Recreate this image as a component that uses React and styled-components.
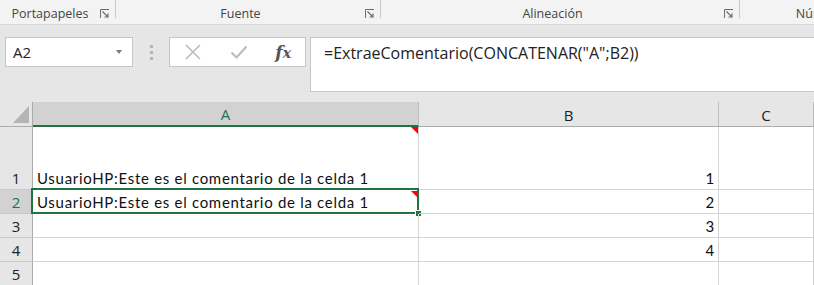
import styled, { createGlobalStyle } from "styled-components";

const GlobalStyle = createGlobalStyle`
  body {
    margin: 0;
    background: #e6e6e6;
    overflow: hidden;
  }
`;

const groups = [
  { label: "Portapapeles", width: 116 },
  { label: "Fuente", width: 265 },
  { label: "Alineación", width: 359 },
  { label: "Número", width: 176 },
];

const rows = [
  { n: 1, a: "UsuarioHP:Este es el comentario de la celda 1", b: "1", height: 63, comment: true },
  { n: 2, a: "UsuarioHP:Este es el comentario de la celda 1", b: "2", height: 24, comment: true, selected: true },
  { n: 3, a: "", b: "3", height: 24 },
  { n: 4, a: "", b: "4", height: 24 },
  { n: 5, a: "", b: "", height: 24 },
];

function Launcher() {
  return (
    <LauncherIcon width="10" height="10" viewBox="0 0 10 10">
      <path d="M0.5 9V0.5H9" fill="none" stroke="#6b6b6b" strokeWidth="1" />
      <path d="M2.5 2.5L8 8M8 4.5V8H4.5" fill="none" stroke="#6b6b6b" strokeWidth="1.2" />
    </LauncherIcon>
  );
}

function App() {
  return (
    <Wrapper>
      <GlobalStyle />
      <Ribbon>
        {groups.map((g) => (
          <Group key={g.label} $width={g.width}>
            <GroupLabel>{g.label}</GroupLabel>
            <Launcher />
            <GroupSeparator />
          </Group>
        ))}
      </Ribbon>

      <FormulaRow>
        <NameBox>
          <span>A2</span>
          <DropArrow />
        </NameBox>
        <Grip>
          <i />
          <i />
          <i />
        </Grip>
        <ActionBox>
          <svg width="18" height="18" viewBox="0 0 18 18">
            <path d="M2 2L16 16M16 2L2 16" stroke="#bcbcbc" strokeWidth="1.6" />
          </svg>
          <svg width="18" height="18" viewBox="0 0 18 18">
            <path d="M1.5 9.5L6.5 14.5L16.5 3.5" fill="none" stroke="#bcbcbc" strokeWidth="2.2" />
          </svg>
          <Fx>
            f<sub>x</sub>
          </Fx>
        </ActionBox>
        <FormulaBox>=ExtraeComentario(CONCATENAR("A";B2))</FormulaBox>
      </FormulaRow>

      <Sheet $rows={rows.map((r) => r.height)}>
        <Corner>
          <svg width="16" height="17" viewBox="0 0 16 17">
            <polygon points="16,0 16,17 0,17" fill="#b5b5b5" />
          </svg>
        </Corner>
        <ColHeader $selected>A</ColHeader>
        <ColHeader>B</ColHeader>
        <ColHeader>C</ColHeader>

        {rows.map((r) => (
          <Row key={r.n}>
            <RowHeader $selected={r.selected}>{r.n}</RowHeader>
            <Cell>
              {r.a}
              {r.comment && <Comment $inset={r.selected} />}
              {r.selected && (
                <Selection>
                  <FillHandle />
                </Selection>
              )}
            </Cell>
            <Cell $align="right">{r.b}</Cell>
            <Cell />
          </Row>
        ))}
      </Sheet>
    </Wrapper>
  );
}

const Wrapper = styled.div`
  width: 814px;
  height: 285px;
  overflow: hidden;
  font-family: "Open Sans", "Noto Sans", sans-serif;
`;

const Ribbon = styled.div`
  display: flex;
  height: 25px;
  box-sizing: border-box;
  background: #f3f3f3;
  border-bottom: 1px solid #d6d6d6;
  white-space: nowrap;
`;

const Group = styled.div`
  flex: none;
  display: flex;
  align-items: flex-start;
  width: ${(p) => p.$width}px;
  height: 24px;
`;

const GroupLabel = styled.div`
  flex: 1;
  min-width: 0;
  text-align: center;
  padding-top: 5px;
  font-size: 12.5px;
  line-height: 17px;
  color: #444;
`;

const LauncherIcon = styled.svg`
  flex: none;
  margin-top: 9px;
  margin-right: 5px;
`;

const GroupSeparator = styled.div`
  flex: none;
  width: 1px;
  height: 18px;
  background: #c9c9c9;
`;

const FormulaRow = styled.div`
  display: flex;
  align-items: flex-start;
  height: 77px;
  box-sizing: border-box;
  padding: 12px 0 0 5px;
`;

const NameBox = styled.div`
  flex: none;
  display: flex;
  align-items: center;
  justify-content: space-between;
  width: 128px;
  height: 30px;
  box-sizing: border-box;
  padding: 0 10px 0 7px;
  background: #fff;
  border: 1px solid #c6c6c6;
  font-size: 15px;
  color: #222;
`;

const DropArrow = styled.span`
  width: 0;
  height: 0;
  border-left: 3.5px solid transparent;
  border-right: 3.5px solid transparent;
  border-top: 4px solid #7a7a7a;
`;

const Grip = styled.div`
  flex: none;
  display: flex;
  flex-direction: column;
  align-items: center;
  gap: 3px;
  width: 36px;
  padding-top: 8px;

  i {
    width: 3px;
    height: 3px;
    background: #b5b5b5;
  }
`;

const ActionBox = styled.div`
  flex: none;
  display: flex;
  align-items: center;
  justify-content: space-between;
  width: 137px;
  height: 30px;
  box-sizing: border-box;
  padding: 0 14px 0 14px;
  margin-right: 4px;
  background: #fff;
  border: 1px solid #c6c6c6;
`;

const Fx = styled.span`
  font-family: "DejaVu Serif", "Liberation Serif", serif;
  font-style: italic;
  font-weight: bold;
  font-size: 17px;
  color: #555;
  line-height: 1;

  sub {
    font-size: 14px;
    vertical-align: 0;
  }
`;

const FormulaBox = styled.div`
  flex: 1;
  height: 55px;
  box-sizing: border-box;
  margin-right: -2px;
  padding: 5px 13px;
  background: #fff;
  border: 1px solid #c6c6c6;
  font-size: 16px;
  line-height: 20px;
  color: #222;
  white-space: nowrap;
`;

const Sheet = styled.div`
  display: grid;
  grid-template-columns: 33px 386px 300px 1fr;
  grid-template-rows: 25px ${(p) => p.$rows.map((h) => `${h}px`).join(" ")};
  background: #fff;
`;

const Row = styled.div`
  display: contents;
`;

const Corner = styled.div`
  display: flex;
  align-items: flex-end;
  justify-content: flex-end;
  padding: 0 3px 3px 0;
  background: #e6e6e6;
  border-right: 1px solid #ababab;
  border-bottom: 1px solid #ababab;
`;

const ColHeader = styled.div`
  display: flex;
  align-items: center;
  justify-content: center;
  box-sizing: border-box;
  padding-top: 1px;
  background: ${(p) => (p.$selected ? "#d2d2d2" : "#e6e6e6")};
  color: ${(p) => (p.$selected ? "#217346" : "#222")};
  border-right: 1px solid #bdbdbd;
  border-bottom: ${(p) => (p.$selected ? "2px solid #217346" : "1px solid #ababab")};
  font-size: 15px;
`;

const RowHeader = styled.div`
  display: flex;
  align-items: flex-end;
  justify-content: center;
  padding-bottom: 1px;
  background: ${(p) => (p.$selected ? "#d2d2d2" : "#e6e6e6")};
  color: ${(p) => (p.$selected ? "#217346" : "#222")};
  border-right: 1px solid #ababab;
  border-bottom: 1px solid #c9c9c9;
  font-size: 15px;
  line-height: 20px;
`;

const Cell = styled.div`
  position: relative;
  display: flex;
  align-items: flex-end;
  justify-content: ${(p) => (p.$align === "right" ? "flex-end" : "flex-start")};
  padding: 0 3px 1px 4px;
  border-right: 1px solid #d4d4d4;
  border-bottom: 1px solid #d4d4d4;
  font-family: Lato, "Open Sans", sans-serif;
  font-size: 15px;
  letter-spacing: 0.7px;
  line-height: 20px;
  color: #111;
  white-space: nowrap;
`;

const Comment = styled.span`
  position: absolute;
  top: ${(p) => (p.$inset ? 1 : 0)}px;
  right: ${(p) => (p.$inset ? 1 : 0)}px;
  width: 0;
  height: 0;
  border-left: ${(p) => (p.$inset ? 6 : 7)}px solid transparent;
  border-top: ${(p) => (p.$inset ? 6 : 7)}px solid #ff0000;
`;

const Selection = styled.div`
  position: absolute;
  top: -2px;
  left: -2px;
  right: -1px;
  bottom: -1px;
  border: 2px solid #217346;
  pointer-events: none;
`;

const FillHandle = styled.span`
  position: absolute;
  right: -4px;
  bottom: -4px;
  width: 5px;
  height: 5px;
  background: #217346;
  box-shadow: 0 0 0 1px #fff;
`;

export default App;
